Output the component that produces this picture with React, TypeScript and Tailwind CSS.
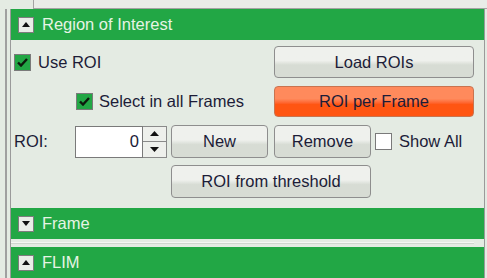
import React from 'react';

const font = { fontFamily: '"Liberation Sans", Arial, sans-serif' };

const Arrow = ({ up }: { up: boolean }) => (
  <div className="w-[16px] h-[16px] bg-[#e9ede7] border border-[#7d7d7d] flex items-center justify-center">
    <svg width="8" height="5" viewBox="0 0 8 5">
      {up ? <path d="M0 5 L4 0 L8 5 Z" fill="#111" /> : <path d="M0 0 L4 5 L8 0 Z" fill="#111" />}
    </svg>
  </div>
);

const Header = ({ title, up, h = 'h-[31px]' }: { title: string; up: boolean; h?: string }) => (
  <div className={`${h} bg-[#22a745] flex items-center pl-[7px] gap-[8px]`}>
    <Arrow up={up} />
    <span className="text-[16.5px] text-[#e6f4e4]">{title}</span>
  </div>
);

const Check = ({ checked }: { checked: boolean }) => (
  <div
    className={`w-[17px] h-[17px] border border-[#7a7a7a] flex items-center justify-center ${
      checked ? 'bg-[#22a745]' : 'bg-white'
    }`}
  >
    {checked && (
      <svg width="11" height="9" viewBox="0 0 11 9">
        <path d="M1 4.5 L4 7.5 L10 1" stroke="#0d1a0d" strokeWidth="2.4" fill="none" />
      </svg>
    )}
  </div>
);

const Btn = ({ label, w, h = 'h-[32px]', orange }: { label: string; w: string; h?: string; orange?: boolean }) => (
  <div
    className={`${w} ${h} rounded-[4px] border flex items-center justify-center text-[16.5px] text-[#1c1c38] ${
      orange
        ? 'border-[#c9734f] bg-linear-to-b from-[#ff8a5c] from-40% to-[#ff5512] to-60%'
        : 'border-[#8e8e8e] bg-linear-to-b from-[#eff1ed] from-45% to-[#d7dcd4] to-60%'
    }`}
  >
    {label}
  </div>
);

export default function App() {
  return (
    <div className="w-[487px] h-[278px] bg-[#e4ebe3] overflow-hidden" style={font}>
      <div className="h-[9px] flex">
        <div className="ml-[33px] flex-1 border-l border-b border-[#a3a3a3] bg-[#e9ece8]" />
      </div>
      <div className="ml-[5px] border-l-2 border-[#a0a0a0] pl-[3px] h-[269px]">
        <div className="w-[475px] border-l border-r border-[#9a9a9a] h-full">
          <Header title="Region of Interest" up h="h-[31px]" />
          <div className="h-[168px] pt-[6px] pl-[3px] text-[16.5px] text-[#1c1c38]">
            <div className="flex h-[32px]">
              <div className="w-[260px] flex items-center gap-[7px]">
                <Check checked />
                <span>Use ROI</span>
              </div>
              <Btn label="Load ROIs" w="w-[200px]" />
            </div>
            <div className="flex h-[31px] mt-[8px]">
              <div className="w-[260px] flex items-center gap-[6px] pl-[62px]">
                <Check checked />
                <span>Select in all Frames</span>
              </div>
              <Btn label="ROI per Frame" w="w-[200px]" h="h-[31px]" orange />
            </div>
            <div className="flex h-[33px] mt-[8px] items-center">
              <span className="w-[61px]">ROI:</span>
              <div className="w-[68px] h-[32px] bg-white border border-[#7a7a7a] flex items-center justify-end pr-[3px]">
                0
              </div>
              <div className="w-[24px] h-[32px] flex flex-col">
                <div className="h-[16px] border border-l-0 border-[#8a8a8a] bg-[#eef0ec] flex items-center justify-center">
                  <svg width="9" height="5" viewBox="0 0 9 5"><path d="M0 5 L4.5 0 L9 5 Z" fill="#111" /></svg>
                </div>
                <div className="h-[16px] border border-l-0 border-t-0 border-[#8a8a8a] bg-[#eef0ec] flex items-center justify-center">
                  <svg width="9" height="5" viewBox="0 0 9 5"><path d="M0 0 L4.5 5 L9 0 Z" fill="#111" /></svg>
                </div>
              </div>
              <div className="ml-[4px]">
                <Btn label="New" w="w-[97px]" h="h-[33px]" />
              </div>
              <div className="ml-[6px]">
                <Btn label="Remove" w="w-[97px]" h="h-[33px]" />
              </div>
              <div className="ml-[4px] flex items-center gap-[7px]">
                <Check checked={false} />
                <span>Show All</span>
              </div>
            </div>
            <div className="mt-[7px] ml-[157px]">
              <Btn label="ROI from threshold" w="w-[200px]" h="h-[33px]" />
            </div>
          </div>
          <Header title="Frame" up={false} />
          <div className="h-[8px] flex items-center pr-[10px]">
            <div className="flex-1 h-[2px] bg-[#cfd6ce] border-t border-[#f4f6f3]" />
          </div>
          <Header title="FLIM" up />
        </div>
      </div>
    </div>
  );
}
